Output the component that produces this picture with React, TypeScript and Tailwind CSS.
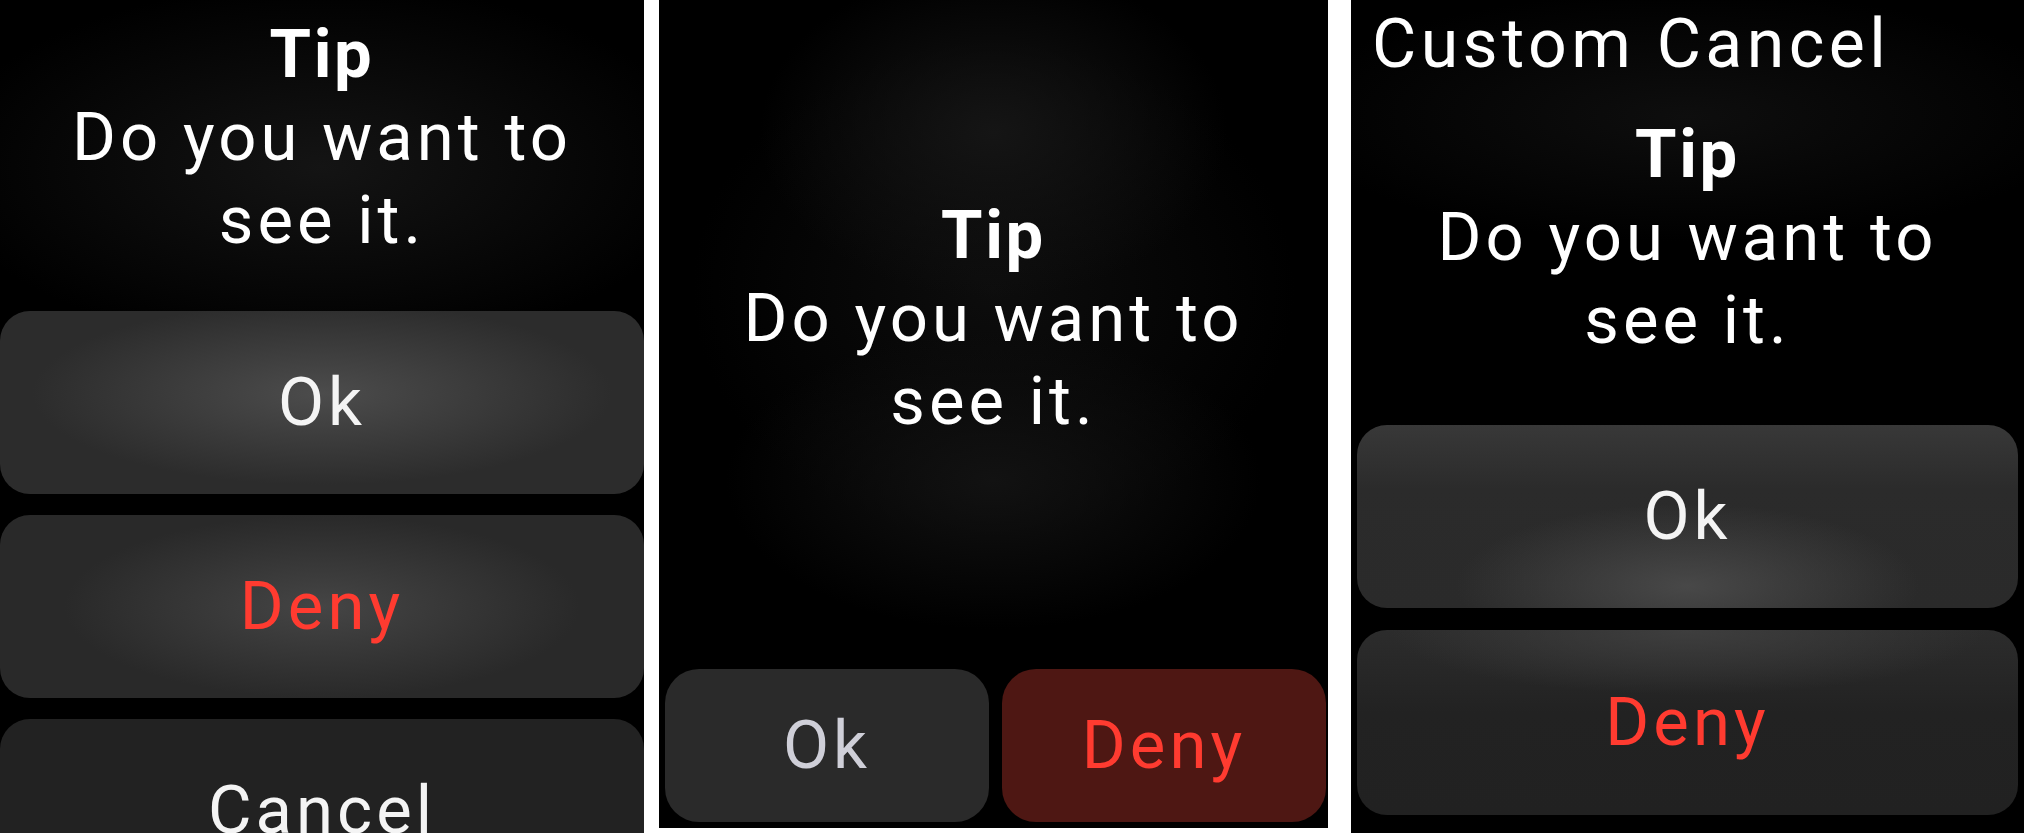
const font = { fontFamily: "Roboto, 'Liberation Sans', sans-serif" };

function Message({ className = "" }: { className?: string }) {
  return (
    <div className={`flex flex-col items-center text-white text-[67px] leading-[83px] tracking-[0.06em] ${className}`}>
      <div className="font-bold tracking-[0.04em]">Tip</div>
      <div>Do you want to</div>
      <div>see it.</div>
    </div>
  );
}

export default function App() {
  return (
    <div className="flex items-start w-[2024px] h-[833px] bg-white overflow-hidden" style={font}>
      {/* panel 1: stacked actions with cancel */}
      <div className="w-[644px] h-[833px] shrink-0 bg-black bg-[radial-gradient(ellipse_60%_22%_at_50%_20%,#141414,transparent)] overflow-hidden flex flex-col">
        <Message className="pt-[13px]" />
        <div className="mt-[49px] flex flex-col gap-[21px]">
          <div className="h-[183px] rounded-[30px] bg-[radial-gradient(ellipse_45%_50%_at_50%_45%,#4c4c4c,#2c2c2c)] flex items-center justify-center text-[67px] tracking-[0.06em] text-[#f4f4f4]">
            Ok
          </div>
          <div className="h-[183px] rounded-[30px] bg-[radial-gradient(ellipse_40%_50%_at_50%_50%,#454545,#292929)] flex items-center justify-center text-[67px] tracking-[0.06em] text-[#ff3b30]">
            Deny
          </div>
          <div className="h-[183px] rounded-[30px] bg-[#222222] flex items-center justify-center text-[67px] tracking-[0.06em] text-[#f4f4f4]">
            Cancel
          </div>
        </div>
      </div>

      {/* panel 2: side by side actions */}
      <div className="ml-[15px] w-[669px] h-[828px] shrink-0 bg-black bg-[radial-gradient(ellipse_35%_20%_at_50%_16%,#151515,transparent),radial-gradient(ellipse_40%_18%_at_50%_58%,#121212,transparent),radial-gradient(ellipse_45%_30%_at_50%_35%,#0d0d0d,transparent)] overflow-hidden flex flex-col">
        <Message className="pt-[194px]" />
        <div className="mt-auto mb-[6px] pl-[6px] pr-[2px] flex gap-[13px]">
          <div className="flex-1 h-[153px] rounded-[34px] bg-[#2a2a2a] flex items-center justify-center text-[67px] tracking-[0.06em] text-[#cfcfd8]">
            Ok
          </div>
          <div className="flex-1 h-[153px] rounded-[34px] bg-[#4e1713] flex items-center justify-center text-[67px] tracking-[0.06em] text-[#ff3b30]">
            Deny
          </div>
        </div>
      </div>

      {/* panel 3: custom cancel title */}
      <div className="ml-[23px] w-[673px] h-[833px] shrink-0 bg-black bg-[radial-gradient(ellipse_60%_15%_at_50%_14%,#0e0e0e,transparent)] overflow-hidden flex flex-col">
        <div className="pl-[21px] pt-[3px] text-white text-[68px] leading-[83px] tracking-[0.065em]">Custom Cancel</div>
        <Message className="mt-[27px]" />
        <div className="mt-[63px] px-[6px] flex flex-col gap-[22px]">
          <div className="h-[183px] rounded-[30px] bg-[radial-gradient(ellipse_35%_45%_at_50%_88%,#484848,transparent),linear-gradient(#383838,#2b2b2b_35%,#2a2a2a)] flex items-center justify-center text-[67px] tracking-[0.06em] text-[#f4f4f4]">
            Ok
          </div>
          <div className="h-[185px] rounded-[30px] bg-[radial-gradient(ellipse_45%_35%_at_50%_0%,#3e3e3e,transparent),linear-gradient(#2c2c2c,#222222_45%,#212121)] flex items-center justify-center text-[67px] tracking-[0.06em] text-[#ff3b30]">
            Deny
          </div>
        </div>
      </div>
    </div>
  );
}
